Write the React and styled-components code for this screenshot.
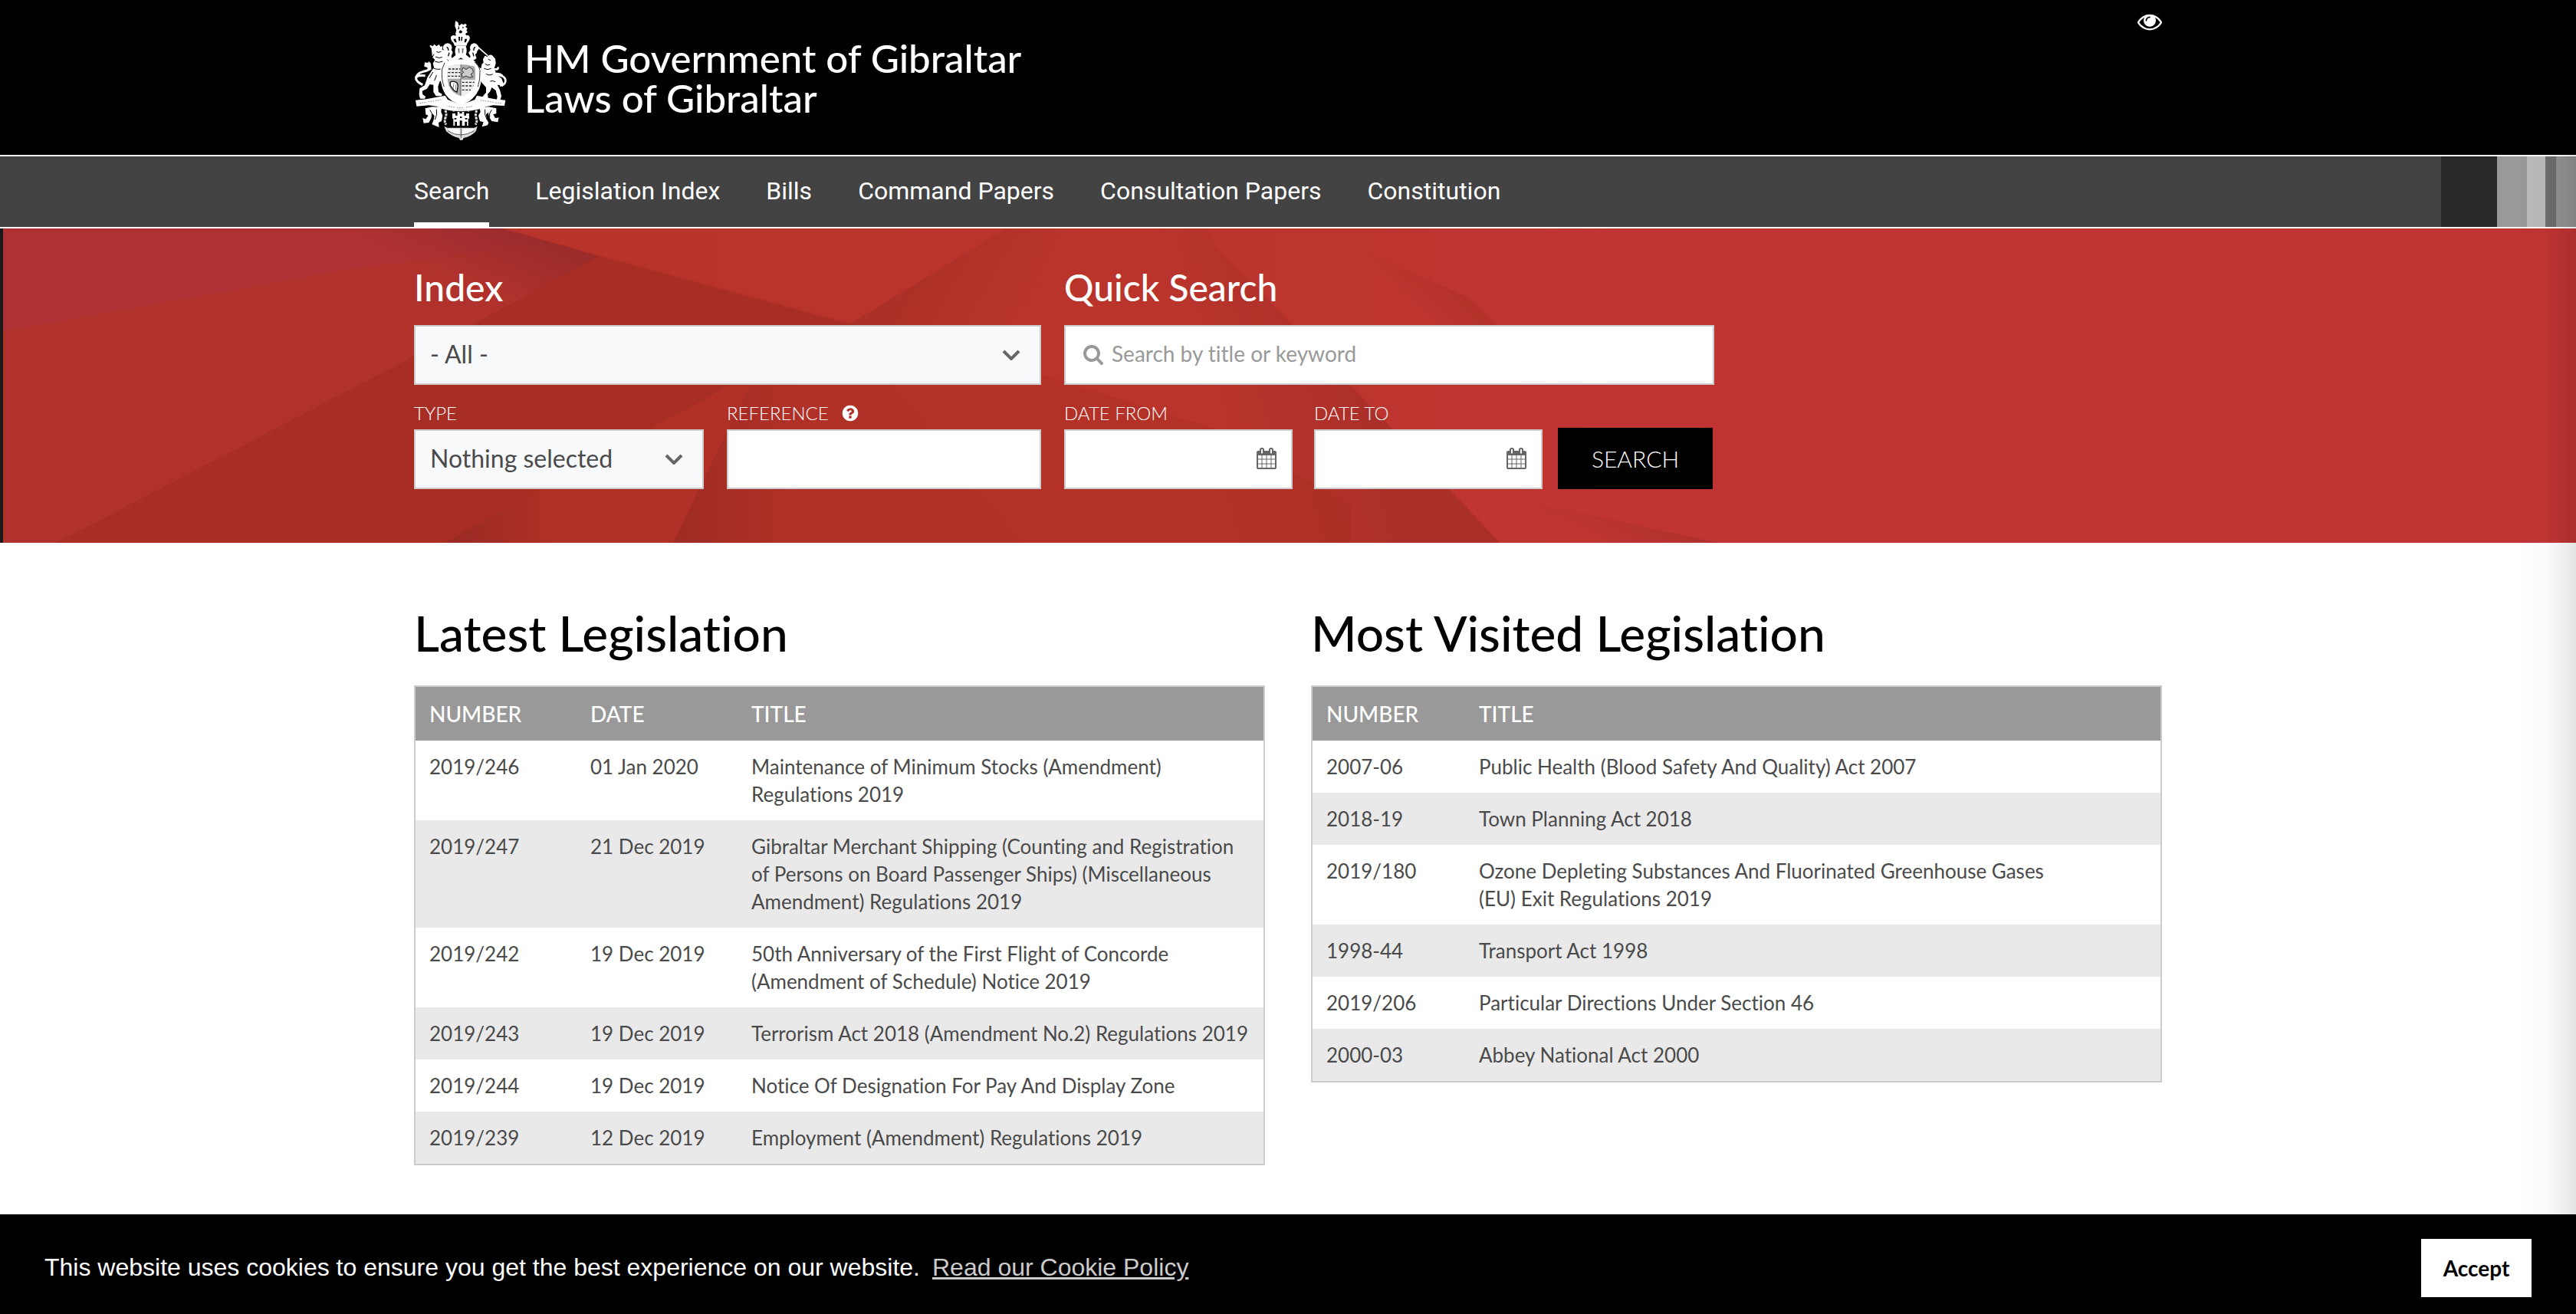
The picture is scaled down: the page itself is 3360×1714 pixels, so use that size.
import React, { useState } from "react";

import styled, { createGlobalStyle } from "styled-components";

const menu = ["Search", "Legislation Index", "Bills", "Command Papers", "Consultation Papers", "Constitution"];

const latest = [
	["2019/246", "01 Jan 2020", "Maintenance of Minimum Stocks (Amendment) Regulations 2019"],
	[
		"2019/247",
		"21 Dec 2019",
		"Gibraltar Merchant Shipping (Counting and Registration of Persons on Board Passenger Ships) (Miscellaneous Amendment) Regulations 2019",
	],
	["2019/242", "19 Dec 2019", "50th Anniversary of the First Flight of Concorde (Amendment of Schedule) Notice 2019"],
	["2019/243", "19 Dec 2019", "Terrorism Act 2018 (Amendment No.2) Regulations 2019"],
	["2019/244", "19 Dec 2019", "Notice Of Designation For Pay And Display Zone"],
	["2019/239", "12 Dec 2019", "Employment (Amendment) Regulations 2019"],
];

const mostVisited = [
	["2007-06", "Public Health (Blood Safety And Quality) Act 2007"],
	["2018-19", "Town Planning Act 2018"],
	["2019/180", "Ozone Depleting Substances And Fluorinated Greenhouse Gases (EU) Exit Regulations 2019"],
	["1998-44", "Transport Act 1998"],
	["2019/206", "Particular Directions Under Section 46"],
	["2000-03", "Abbey National Act 2000"],
];

//icon outlines, all on a 1792 grid
const icons = {
	eye: "M1664 960q-152-236-381-353 61 104 61 225 0 185-131.5 316.5t-316.5 131.5-316.5-131.5-131.5-316.5q0-121 61-225-229 117-381 353 133 205 333.5 326.5t434.5 121.5 434.5-121.5 333.5-326.5zm-720-384q0-20-14-34t-34-14q-125 0-214.5 89.5t-89.5 214.5q0 20 14 34t34 14 34-14 14-34q0-86 61-147t147-61q20 0 34-14t14-34zm848 384q0 34-20 69-140 230-376.5 368.5t-499.5 138.5-499.5-139-376.5-368q-20-35-20-69t20-69q140-229 376.5-368t499.5-139 499.5 139 376.5 368q20 35 20 69z",
	search:
		"M1216 832q0-185-131.5-316.5t-316.5-131.5-316.5 131.5-131.5 316.5 131.5 316.5 316.5 131.5 316.5-131.5 131.5-316.5zm512 832q0 52-38 90t-90 38q-54 0-90-38l-343-342q-179 124-399 124-143 0-273.5-55.5t-225-150-150-225-55.5-273.5 55.5-273.5 150-225 225-150 273.5-55.5 273.5 55.5 225 150 150 225 55.5 273.5q0 220-124 399l343 343q37 37 37 90z",
	help: "M1024 1376v-192q0-14-9-23t-23-9h-192q-14 0-23 9t-9 23v192q0 14 9 23t23 9h192q14 0 23-9t9-23zm256-672q0-88-55.5-163t-138.5-116-170-41q-243 0-371 213-15 24 8 42l132 100q7 6 19 6 16 0 25-12 53-68 86-92 34-24 86-24 48 0 85.5 26t37.5 59q0 38-20 61t-68 45q-63 28-115.5 86.5t-52.5 125.5v36q0 14 9 23t23 9h192q14 0 23-9t9-23q0-19 21.5-49.5t54.5-49.5q32-18 49-28.5t46-35 44.5-48 28-60.5 12.5-81zm384 192q0 209-103 385.5t-279.5 279.5-385.5 103-385.5-103-279.5-279.5-103-385.5 103-385.5 279.5-279.5 385.5-103 385.5 103 279.5 279.5 103 385.5z",
	calendar:
		"M192 1664h288v-288h-288v288zm352 0h320v-288h-320v288zm-352-352h288v-320h-288v320zm352 0h320v-320h-320v320zm-352-384h288v-288h-288v288zm736 736h320v-288h-320v288zm-384-736h320v-288h-320v288zm768 736h288v-288h-288v288zm-384-352h320v-320h-320v320zm-352-864v-288q0-13-9.5-22.5t-22.5-9.5h-64q-13 0-22.5 9.5t-9.5 22.5v288q0 13 9.5 22.5t22.5 9.5h64q13 0 22.5-9.5t9.5-22.5zm736 864h288v-320h-288v320zm-384-384h320v-288h-320v288zm384 0h288v-288h-288v288zm32-480v-288q0-13-9.5-22.5t-22.5-9.5h-64q-13 0-22.5 9.5t-9.5 22.5v288q0 13 9.5 22.5t22.5 9.5h64q13 0 22.5-9.5t9.5-22.5zm384-64v1280q0 52-38 90t-90 38h-1408q-52 0-90-38t-38-90v-1280q0-52 38-90t90-38h128v-96q0-66 47-113t113-47h64q66 0 113 47t47 113v96h384v-96q0-66 47-113t113-47h64q66 0 113 47t47 113v96h128q52 0 90 38t38 90z",
};

const Icon = ({ name, size }) => (
	<svg width={size} height={size} viewBox="0 0 1792 1792" fill="currentColor" aria-hidden="true">
		<path d={icons[name]} />
	</svg>
);

/**
 * Coat of arms: lion and unicorn round the garter, crown on top, castle and key badge below
 */
const Crest = () => (
	<CrestSvg viewBox="62 46 366 474" fill="#fff" stroke="none" aria-hidden="true">
		{/* crest lion and crown */}
		<path d="M224 50l10 5 4 14 10-8 8 4 6-5 7 6-6 7 8 6-4 8 5 6-9 8 6 10-10-2-13 4-16-2-6-10 4-16-6-14z" />
		<path d="M206 112q8-10 18-4l8-8 12-4 12 4 8 8q12-6 16 5 2 12-9 24l-4 10h-46l-5-12q-12-10-10-23z" />
		<path d="M216 120l9 0 4 14-7 0zM236 112h6v16h-5zM247 112h5l-2 16h-4zM261 120l9 0-5 14-6 0z" fill="#000" />
		<path d="M238 92l6-6 8 6-4 6h-8zM236 68l4 12-6 4zM252 72l6 4-6 4z" fill="#000" />
		{/* helmet with its mantling */}
		<path d="M227 148h38q6 18 0 34l20 16 20 14-28 2-32-20-34 22-24-2 20-16 18-14q-6-18 2-36z" />
		<path d="M234 158h6v18h-4zM250 158h6l-2 18h-4z" fill="#000" opacity="0.6" />
		<path d="M178 146q12-16 28-4 8 10 2 22l6 8-6 16 4 12-14 6-12-12 6-16q-8 0-8-10-14-8-6-22z" />
		<path d="M312 146q-12-16-26-4-8 10-3 22l-8 10 8 14-4 12 14 6 14-10-6-16q8-2 8-12 12-8 3-22z" />
		<path d="M190 152q8 4 6 14M302 152q-8 4-6 14M200 174l-4 14M292 174l4 14" fill="none" stroke="#000" strokeWidth="4" />
		{/* lion on the left */}
		<path d="M130 156q-10-8-4-12l10 5 5-8 9 8 10-7 6 9 8-3-2 14 14 4 6 14-4 12 8 16-4 20-8 12-4 30q-6 12-18 18l-6 20 2 20 14 8-2 8h-22l-10-16 0-28-14-2-12 18-18 8 2 14 12 8-4 8H86l-4-16 2-24 20-12 10-30 12-20 14-20-4-16 8-14-10-10z" />
		<path d="M106 264Q68 260 70 276Q72 288 96 300M70 278Q68 256 98 248Q116 246 122 236" fill="none" stroke="#fff" strokeWidth="9" />
		<path d="M104 212l12 2 4-6 8 8 2 24-12 6-4-14-12-4z" />
		<path d="M150 170q8 6 18 0M146 190q12 8 26 2M144 208q14 8 30 0M132 230q14 12 34 8M140 180l-6 12M136 250l-14 24M150 262l-8 22" fill="none" stroke="#000" strokeWidth="3" />
		{/* unicorn on the right */}
		<path d="M314 150l38 34-3 4-39-34z" />
		<path d="M348 190q12-12 22-4l10 12 2 18-6 20 10 26 18 12 8 20-2 14-8-6-14-2 10 20 6 24-4 14h-14l2-12-6-24-16-12-6 16-10 10 2 14-10 8h-14l4-14 12-14 0-20-18-20-12-26-12-10-4-20 10-6 16 8 4-18 6-4-2-14 8-14z" />
		<path d="M376 238q18 4 14-8M386 262Q422 264 420 286Q416 304 398 302M368 262Q392 250 408 264" fill="none" stroke="#fff" strokeWidth="8" />
		<path d="M340 218q10 10 20 2M336 236q14 8 28 0M344 256q10 10 26 2M360 286q10-4 20 2M352 200l10 4" fill="none" stroke="#000" strokeWidth="3" />
		{/* garter and the quartered shield */}
		<path d="M190 214q58-28 112 0l22 26q8 60-18 96-28 38-60 40-36-4-62-40-26-42-14-98z" />
		<path d="M196 228q50-16 104 0 6 40-4 74-14 32-50 42-36-8-48-42-10-32-2-74z" fill="#aaa" />
		<path d="M196 228q24-8 49-8v56h-53q-2-26 4-48zM246 280h54q-2 24-16 44-14 16-38 20z" fill="#eee" />
		<path d="M197 238h46M195 252h48M194 266h48M250 290h48M250 304h44M250 320h34" fill="none" stroke="#222" strokeWidth="4" strokeDasharray="9 5" />
		<path d="M254 232l12 8 12-9 14 8 2 12-10 8 8 10-14 2-12-6-14 6-4-14 8-6-6-8z" fill="#ccc" stroke="#333" strokeWidth="3" />
		<path d="M204 290q12-8 26 2l4 12-4 24q-12-4-18-14l-8-12z" fill="#fff" stroke="#111" strokeWidth="4" />
		<path d="M218 294l-4 28M226 300v20M245 222v120" stroke="#333" strokeWidth="2" />
		<path d="M182 214l-10 24q-4 40 8 70M308 214l12 28q2 36-8 66" fill="none" stroke="#333" strokeWidth="3" />
		{/* motto ribbon */}
		<path d="M68 360l42-4 74-14 10 16 36 14h32l38-14 8-16 70 14 42 4-4 22-44-2-30 6-12 6q-42 12-84 12t-82-12l-14-8-30-4-48 4z" />
		<path d="M84 372l28-4M118 366l22-2M146 362l22-4M198 384l24 4M230 390h28M266 388l24-4M322 360l22 4M350 364l24 4M380 370l24 2" fill="none" stroke="#888" strokeWidth="3" strokeDasharray="5 4" />
		{/* leaves on each side of the badge */}
		<path d="M106 392l28-6 36 2-2 18 6 14-4 22-12 6 2 18-20-8-8-4 6-14 4-18-8-10q-2 18-14 36l-20 2-4-20 12 4 10-14-10-4z" />
		<path d="M384 392l-30-6-36 2 4 18-8 14 6 22 14 4-6 18 22-6 4-10-8-14-2-18 8-8q2 18 14 34l24 4 4-18-14 2-8-14 12-4z" />
		<path d="M124 398q12 12 8 30M150 396q4 22-6 40M366 398q-12 12-8 30M340 396q-4 22 8 40" fill="none" stroke="#000" strokeWidth="3" />
		{/* castle badge with the key below */}
		<path d="M184 400Q192 412 184 432Q180 446 188 456M308 400Q300 412 306 432Q310 446 302 456" fill="none" stroke="#ddd" strokeWidth="9" strokeDasharray="10 3" />
		<path d="M180 462l8 20q22 20 50 26l4 8h10l4-8q30-6 48-26l6-20-12 6H192z" fill="#ddd" />
		<path d="M212 412h12v8h8v-14h8v6h10v-6h8v14h8v-8h12v20h-4v28h-58v-28h-4z" />
		<path d="M222 444h8v16h-8zM241 440h9v20h-9zM261 444h8v16h-8zM220 430h8v5h-8zM242 424h7v6h-7zM262 430h8v5h-8z" fill="#000" />
		<path d="M196 472q4 14 24 20l20 4V474zM296 472q-4 14-24 20l-20 4V474z" fill="#fff" />
		<path d="M194 480q50 32 104 0M246 470v38" fill="none" stroke="#555" strokeWidth="3" />
		<path d="M214 404q32-12 64 0" fill="none" stroke="#ccc" strokeWidth="5" strokeDasharray="7 3" />
	</CrestSvg>
);

/**
 * Folded paper backdrop behind the search form
 */
const Backdrop = () => (
	<BackdropSvg viewBox="0 0 3360 410" preserveAspectRatio="none" aria-hidden="true">
		<defs>
			<linearGradient id="base" x1="0" x2="1">
				<stop offset="0.25" stopColor="#b8342b" />
				<stop offset="0.45" stopColor="#ba342c" />
				<stop offset="0.62" stopColor="#c03533" />
			</linearGradient>
			<linearGradient id="fold" x1="0" x2="1">
				<stop offset="0" stopColor="#972a22" />
				<stop offset="0.35" stopColor="#b03027" />
			</linearGradient>
			<linearGradient id="ridge" gradientUnits="userSpaceOnUse" x1="1560" y1="260" x2="1790" y2="200">
				<stop offset="0" stopColor="#a52e26" stopOpacity="0" />
				<stop offset="1" stopColor="#a52e26" stopOpacity="0.8" />
			</linearGradient>
			<linearGradient id="topShade" gradientUnits="userSpaceOnUse" x1="662" y1="100" x2="700" y2="14">
				<stop offset="0" stopColor="#962b2a" stopOpacity="0" />
				<stop offset="1" stopColor="#962b2a" stopOpacity="0.8" />
			</linearGradient>
			<linearGradient id="arc" gradientUnits="userSpaceOnUse" x1="1890" y1="50" x2="1840" y2="100">
				<stop offset="0" stopColor="#b23029" stopOpacity="0" />
				<stop offset="0.1" stopColor="#b23029" stopOpacity="0" />
				<stop offset="0.2" stopColor="#b23029" stopOpacity="0.9" />
				<stop offset="1" stopColor="#b23029" stopOpacity="0" />
			</linearGradient>
			<linearGradient id="slope" gradientUnits="userSpaceOnUse" x1="1190" y1="60" x2="1330" y2="140">
				<stop offset="0" stopColor="#a92f26" stopOpacity="0.8" />
				<stop offset="1" stopColor="#a92f26" stopOpacity="0" />
			</linearGradient>
			<linearGradient id="sweep" gradientUnits="userSpaceOnUse" x1="2080" y1="340" x2="2050" y2="400">
				<stop offset="0" stopColor="#ae302c" stopOpacity="0.8" />
				<stop offset="1" stopColor="#ae302c" stopOpacity="0" />
			</linearGradient>
		</defs>
		<rect width="3360" height="410" fill="url(#base)" />
		<path d="M0 0H652L1360 192L1583 262L1760 360V410H0z" fill="#b33127" />
		<path d="M0 0H652L778 36L538 174L70 410H0z" fill="#b1322d" />
		<path d="M0 0H652L720 20L600 34L480 48L0 134z" fill="#af3133" />
		<path d="M300 0H652L778 36L600 138L300 100z" fill="url(#topShade)" />
		<path d="M70 410L538 166L778 36L1105 125L1150 140L1060 170L950 204L577 410z" fill="#a82d24" />
		<path d="M577 410L950 204H980L875 410z" fill="url(#fold)" />
		<path d="M875 410L975 204L1100 130L1330 410z" fill="url(#fold)" opacity="0.75" />
		<path d="M1105 125L1310 0H1583L1700 160L1380 200z" fill="url(#slope)" />
		<path d="M1290 0H1572L1583 22L1683 125L1759 204L1815 262L1955 410H1560L1560 262L1360 192L1105 125z" fill="url(#ridge)" />
		<path d="M1710 0L1759 22L1994 125L2180 210L1900 200L1600 0z" fill="url(#arc)" />
		<path d="M1880 324L1917 340L2240 410H1955z" fill="url(#sweep)" />
	</BackdropSvg>
);

const SelectField = ({ id, options, label }) => (
	<Control>
		<Select id={id} aria-label={label}>
			{options.map((option) => (
				<option key={option}>{option}</option>
			))}
		</Select>
		<Chevron viewBox="0 0 24 14" aria-hidden="true">
			<path d="M2 2l10 10L22 2" fill="none" stroke="#666" strokeWidth="4" />
		</Chevron>
	</Control>
);

const DateField = ({ id, label }) => (
	<Field>
		<Label htmlFor={id}>{label}</Label>
		<Control>
			<Input id={id} type="text" />
			<CalendarButton type="button" aria-label={`Pick ${label.toLowerCase()}`}>
				<Icon name="calendar" size={28} />
			</CalendarButton>
		</Control>
	</Field>
);

const DataTable = ({ title, head, rows, narrow }) => (
	<section>
		<Title>{title}</Title>
		<Table $narrow={narrow}>
			<thead>
				<tr>
					{head.map((name) => (
						<th key={name} scope="col">
							{name}
						</th>
					))}
				</tr>
			</thead>
			<tbody>
				{rows.map((row) => (
					<tr key={row[0]}>
						{row.map((cell) => (
							<td key={cell}>{cell}</td>
						))}
					</tr>
				))}
			</tbody>
		</Table>
	</section>
);

const App = () => {
	//cookie bar stays until it is accepted
	const [accepted, setAccepted] = useState(false);

	return (
		<Page>
			<GlobalStyle />

			<Header>
				<HeaderInner>
					<Logo href="#">
						<Crest />
						<LogoText>
							<span>HM Government of Gibraltar</span>
							<span>Laws of Gibraltar</span>
						</LogoText>
					</Logo>
					<EyeButton type="button" aria-label="Accessibility">
						<Icon name="eye" size={32} />
					</EyeButton>
				</HeaderInner>
			</Header>

			<Nav>
				<NavInner>
					{menu.map((item, index) => (
						<NavLink key={item} href="#" $active={index === 0}>
							{item}
						</NavLink>
					))}
				</NavInner>
			</Nav>

			<Hero>
				<Backdrop />
				<SearchForm onSubmit={(e) => e.preventDefault()}>
					<div>
						<FormTitle>Index</FormTitle>
						<SelectField id="index" label="Index" options={["- All -"]} />
						<TypeRow>
							<Field>
								<Label htmlFor="type">TYPE</Label>
								<SelectField id="type" options={["Nothing selected"]} />
							</Field>
							<Field>
								<Label htmlFor="reference">
									REFERENCE <Icon name="help" size={24} />
								</Label>
								<Input id="reference" type="text" />
							</Field>
						</TypeRow>
					</div>
					<div>
						<FormTitle>Quick Search</FormTitle>
						<Control>
							<SearchIcon>
								<Icon name="search" size={28} />
							</SearchIcon>
							<Input type="text" $icon aria-label="Quick Search" placeholder="Search by title or keyword" />
						</Control>
						<DateRow>
							<Dates>
								<DateField id="from" label="DATE FROM" />
								<DateField id="to" label="DATE TO" />
							</Dates>
							<SearchButton type="submit">SEARCH</SearchButton>
						</DateRow>
					</div>
				</SearchForm>
			</Hero>

			<Main>
				<DataTable title="Latest Legislation" head={["NUMBER", "DATE", "TITLE"]} rows={latest} />
				<DataTable title="Most Visited Legislation" head={["NUMBER", "TITLE"]} rows={mostVisited} narrow />
			</Main>

			<EdgeShade />

			{!accepted && (
				<CookieBar>
					<p>
						This website uses cookies to ensure you get the best experience on our website.
						<CookieLink href="#">Read our Cookie Policy</CookieLink>
					</p>
					<AcceptButton type="button" onClick={() => setAccepted(true)}>
						Accept
					</AcceptButton>
				</CookieBar>
			)}
		</Page>
	);
};

const GlobalStyle = createGlobalStyle`
	* {
		box-sizing: border-box;
	}

	body {
		margin: 0;
		background: #fff;
		color: #4a4a4a;
		font-family: Lato, sans-serif;
		font-size: 26px;
		font-variant-ligatures: none;
	}

	h1, h2, p {
		margin: 0;
	}

	button, input, select {
		font-family: inherit;
		font-variant-ligatures: inherit;
		border-radius: 0;
	}

	svg {
		display: block;
		flex: none;
	}
`;

const Page = styled.div`
	min-height: 100vh;
`;

const Container = styled.div`
	width: calc(100% - 60px);
	max-width: 2280px;
	margin: 0 auto;
`;

const Header = styled.header`
	background: #000;
	border-bottom: 2px solid #fff;
`;

const HeaderInner = styled(Container)`
	display: flex;
	justify-content: space-between;
	align-items: flex-start;
	padding: 26px 0 18px;
`;

const Logo = styled.a`
	display: flex;
	gap: 22px;
	color: #fff;
	text-decoration: none;
`;

const LogoText = styled.span`
	display: flex;
	flex-direction: column;
	padding-top: 24px;
	font-size: 51px;
	font-weight: 500;
	line-height: 52px;
`;

const CrestSvg = styled.svg`
	width: 122px;
	height: 158px;
`;

const EyeButton = styled.button`
	height: 32px;
	margin-top: -14px;
	padding: 0;
	border: 0;
	background: none;
	color: #fff;
	cursor: pointer;
`;

const Nav = styled.nav`
	border-bottom: 2px solid #fff;
	background: linear-gradient(
			to right,
			#282828 73px,
			#999 73px,
			#999 112px,
			#bbb 112px,
			#bbb 136px,
			#6e6e6e 136px,
			#6e6e6e 150px,
			#939393 150px
		)
		right / 176px 100% no-repeat #434343;
`;

const NavInner = styled(Container)`
	display: flex;
	gap: 60px;
`;

const NavLink = styled.a`
	height: 92px;
	color: #fff;
	font-family: Roboto, sans-serif;
	font-size: 32px;
	line-height: 90px;
	text-decoration: none;
	box-shadow: ${({ $active }) => ($active ? "inset 0 -6px #fff" : "none")};
`;

const Hero = styled.div`
	position: relative;
	border-left: 4px solid #1a1a1a;
	background: #c03533;
`;

const BackdropSvg = styled.svg`
	position: absolute;
	inset: 0;
	width: 100%;
	height: 100%;
`;

const SearchForm = styled.form`
	position: relative;
	display: grid;
	grid-template-columns: minmax(0, 818px) minmax(0, 848px);
	gap: 30px;
	width: calc(100% - 60px);
	max-width: 2284px;
	margin: 0 auto;
	padding: 48px 0 70px;
`;

const FormTitle = styled.h2`
	margin-bottom: 20px;
	color: #fff;
	font-size: 48px;
	font-weight: 500;
	line-height: 58px;
`;

const Control = styled.div`
	position: relative;
`;

const Input = styled.input`
	display: block;
	width: 100%;
	height: 78px;
	padding: 0 20px 4px ${({ $icon }) => ($icon ? "60px" : "20px")};
	border: 2px solid #ccc;
	background: #fff;
	color: #4a4a4a;
	font-size: 28px;

	&::placeholder {
		color: #999;
		opacity: 1;
	}
`;

const Select = styled.select`
	display: block;
	width: 100%;
	height: 78px;
	padding: 0 60px 4px 19px;
	border: 2px solid #ccc;
	background: #f8f9fb;
	color: #4a4a4a;
	font-size: 32px;
	appearance: none;
`;

const Chevron = styled.svg`
	position: absolute;
	top: 32px;
	right: 27px;
	width: 24px;
	height: 14px;
	pointer-events: none;
`;

const SearchIcon = styled.span`
	position: absolute;
	top: 24px;
	left: 24px;
	color: #999;
`;

const CalendarButton = styled.button`
	position: absolute;
	top: 24px;
	right: 20px;
	padding: 0;
	border: 0;
	background: none;
	color: #666;
	cursor: pointer;
`;

const Field = styled.div`
	min-width: 0;
`;

const Label = styled.label`
	display: flex;
	align-items: center;
	gap: 16px;
	margin-bottom: 6px;
	color: #fff;
	font-size: 24px;
	font-weight: 300;
	line-height: 30px;
`;

const TypeRow = styled.div`
	display: grid;
	grid-template-columns: 378fr 410fr;
	gap: 30px;
	margin-top: 22px;
`;

const DateRow = styled.div`
	display: flex;
	align-items: flex-end;
	gap: 20px;
	margin-top: 22px;
	padding-right: 2px;
`;

const Dates = styled.div`
	display: grid;
	flex: 1;
	grid-template-columns: 1fr 1fr;
	gap: 28px;
`;

const SearchButton = styled.button`
	width: 202px;
	height: 80px;
	border: 0;
	background: #000;
	color: #fff;
	font-size: 30px;
	font-weight: 300;
	cursor: pointer;
`;

const Main = styled(Container)`
	display: grid;
	grid-template-columns: 1fr 1fr;
	align-items: start;
	gap: 60px;
	padding: 80px 0 194px;
`;

const Title = styled.h1`
	margin-bottom: 30px;
	color: #000;
	font-size: 64px;
	font-weight: 500;
	line-height: 76px;
`;

const Table = styled.table`
	width: 100%;
	border: 2px solid #ccc;
	border-spacing: 0;
	table-layout: fixed;
	text-align: left;

	th,
	td {
		padding: 16px 18px;
		vertical-align: top;
	}

	th {
		width: ${({ $narrow }) => ($narrow ? "199px" : "210px")};
		background: #999;
		color: #fff;
		font-size: 28px;
		font-weight: 500;
		line-height: 38px;
	}

	th:last-child {
		width: auto;
	}

	td {
		line-height: 36px;
	}

	td:last-child {
		padding-right: ${({ $narrow }) => ($narrow ? "110px" : "16px")};
	}

	tbody tr:nth-child(even) {
		background: #e9e9e9;
	}
`;

//soft shade down the right side of the window
const EdgeShade = styled.div`
	position: fixed;
	top: 0;
	right: 0;
	bottom: 0;
	width: 80px;
	background: linear-gradient(to right, transparent, rgba(0, 0, 0, 0.015) 50%, rgba(0, 0, 0, 0.1));
	pointer-events: none;
`;

const CookieBar = styled.div`
	position: fixed;
	right: 0;
	bottom: 0;
	left: 0;
	display: flex;
	align-items: center;
	justify-content: space-between;
	padding: 32px 58px 22px;
	background: #000;
	color: #fff;
	font-family: "Liberation Sans", sans-serif;
	font-size: 32px;
	line-height: 38px;

	p {
		padding-bottom: 2px;
	}
`;

const CookieLink = styled.a`
	margin-left: 16px;
	color: #ccc;
	text-decoration: underline;
`;

const AcceptButton = styled.button`
	width: 144px;
	height: 76px;
	border: 0;
	background: #fff;
	color: #000;
	font-family: Lato, sans-serif;
	font-size: 28px;
	font-weight: 700;
	cursor: pointer;
`;

export default App;
